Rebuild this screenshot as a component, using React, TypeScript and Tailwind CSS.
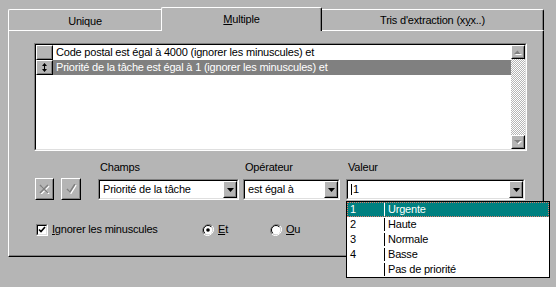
import React from "react";

const FONT = "font-['Liberation_Sans',Arial,sans-serif] text-[11px] leading-[13px] tracking-[-0.2px] text-black";

function Raised({ className = "", children }: { className?: string; children?: React.ReactNode }) {
  return (
    <div className={`border border-t-white border-l-white border-r-black border-b-black ${className}`}>
      <div className="flex h-full w-full items-center justify-center border border-t-transparent border-l-transparent border-r-[#808080] border-b-[#808080]">
        {children}
      </div>
    </div>
  );
}

function Sunken({ className = "", children }: { className?: string; children?: React.ReactNode }) {
  return (
    <div className={`border border-t-[#808080] border-l-[#808080] border-r-white border-b-white ${className}`}>
      <div className="flex h-full w-full border border-t-black border-l-black border-r-[#dfdfdf] border-b-[#dfdfdf] bg-white">
        {children}
      </div>
    </div>
  );
}

function ArrowDown() {
  return (
    <svg width="7" height="4" viewBox="0 0 7 4">
      <path d="M0 0h7L3.5 4z" fill="#000" />
    </svg>
  );
}

function ScrollArrow({ up }: { up?: boolean }) {
  return (
    <svg width="8" height="5" viewBox="0 0 8 5">
      {up ? (
        <>
          <path d="M1 5h7L4.5 1.5z" fill="#fff" />
          <path d="M0 4h7L3.5 0.5z" fill="#808080" />
        </>
      ) : (
        <>
          <path d="M1 1h7L4.5 4.5z" fill="#fff" />
          <path d="M0 0h7L3.5 3.5z" fill="#808080" />
        </>
      )}
    </svg>
  );
}

function Combo({ className, children }: { className: string; children: React.ReactNode }) {
  return (
    <Sunken className={`h-[21px] ${className}`}>
      <div className="flex flex-1 items-center overflow-hidden whitespace-nowrap pl-[3px]">{children}</div>
      <Raised className="h-full w-[14px] bg-[#b5b5b5]">
        <ArrowDown />
      </Raised>
    </Sunken>
  );
}

const values = [
  { n: "1", label: "Urgente" },
  { n: "2", label: "Haute" },
  { n: "3", label: "Normale" },
  { n: "4", label: "Basse" },
  { n: "", label: "Pas de priorité" },
];

export default function App() {
  return (
    <div className={`h-[287px] w-[556px] overflow-hidden bg-[#b5b5b5] pl-[8px] pt-[6px] ${FONT}`}>
      {/* tabs */}
      <div className="flex h-[24px] w-[536px] items-end">
        <div className="flex h-[21px] w-[153px] items-center justify-center rounded-tl-[2px] border-l border-t border-white pt-[2px]">
          Unique
        </div>
        <div className="relative z-10 -mb-px flex h-[24px] w-[161px] items-center justify-center rounded-t-[2px] border-l border-r border-t border-l-white border-r-black border-t-white bg-[#b5b5b5] shadow-[inset_-1px_0_0_#808080]">
          <span>
            <u>M</u>ultiple
          </span>
        </div>
        <div className="flex h-[21px] w-[222px] items-center justify-center rounded-tr-[2px] border-r border-t border-r-black border-t-white pt-[1px] shadow-[inset_-1px_0_0_#808080]">
          <span>
            Tris d'extraction (x<u>y</u>x..)
          </span>
        </div>
      </div>

      {/* panel */}
      <div className="h-[227px] w-[536px] border border-b-black border-l-white border-r-black border-t-white pl-[25px] pt-[12px] shadow-[inset_-1px_-1px_0_#808080]">
        <Sunken className="h-[108px] w-[493px]">
          <div className="flex flex-1 flex-col">
            <div className="flex h-[15px]">
              <Raised className="h-full w-[17px] bg-[#b5b5b5]" />
              <div className="flex items-center whitespace-nowrap pl-[3px]">
                Code postal est égal à 4000 (ignorer les minuscules) et
              </div>
            </div>
            <div className="flex h-[15px] bg-[#808080]">
              <Raised className="h-full w-[17px] bg-[#b5b5b5]">
                <svg width="5" height="9" viewBox="0 0 5 9">
                  <path d="M2.5 0L5 3H0z M0 6h5L2.5 9z" fill="#000" />
                  <rect x="2" y="2" width="1" height="5" fill="#000" />
                </svg>
              </Raised>
              <div className="flex items-center whitespace-nowrap pl-[3px] text-white">
                Priorité de la tâche est égal à 1 (ignorer les minuscules) et
              </div>
            </div>
          </div>
          <div className="flex w-[14px] flex-col bg-[repeating-conic-gradient(#b5b5b5_0_25%,#ffffff_0_50%)] bg-[length:2px_2px]">
            <Raised className="h-[14px] w-[14px] bg-[#b5b5b5]">
              <ScrollArrow up />
            </Raised>
            <div className="flex-1" />
            <Raised className="h-[14px] w-[14px] bg-[#b5b5b5]">
              <ScrollArrow />
            </Raised>
          </div>
        </Sunken>

        {/* field row */}
        <div className="mt-[10px] flex items-end">
          <Raised className="ml-[1px] h-[22px] w-[19px]">
            <svg width="11" height="10" viewBox="0 0 11 10">
              <path d="M2 2l8 8M10 2l-8 8" stroke="#fff" strokeWidth="1.6" />
              <path d="M1 1l8 8M9 1l-8 8" stroke="#808080" strokeWidth="1.6" />
            </svg>
          </Raised>
          <Raised className="ml-[7px] h-[22px] w-[20px]">
            <svg width="11" height="10" viewBox="0 0 11 10">
              <path d="M2 6l3 3 5-8" stroke="#fff" strokeWidth="1.6" fill="none" />
              <path d="M1 5l3 3 5-8" stroke="#808080" strokeWidth="1.6" fill="none" />
            </svg>
          </Raised>
          <div className="ml-[17px] flex flex-col">
            <div className="mb-[5px] pl-[2px]">Champs</div>
            <Combo className="w-[141px]">Priorité de la tâche</Combo>
          </div>
          <div className="ml-[4px] flex flex-col">
            <div className="mb-[5px] pl-[2px]">Opérateur</div>
            <Combo className="w-[97px]">est égal à</Combo>
          </div>
          <div className="relative ml-[6px] flex flex-col">
            <div className="mb-[5px] pl-[2px]">Valeur</div>
            <Combo className="w-[179px]">
              <span className="mr-px inline-block h-[11px] w-[1px] bg-black" />
              1
            </Combo>
            <div className="absolute left-0 top-full z-20 mt-px h-[77px] w-[204px] border border-black bg-white">
              {values.map((v, i) => (
                <div
                  key={i}
                  className={`flex h-[15px] leading-[13px] ${
                    i === 0 ? "border border-dotted border-[#e07a6a] bg-[#008080] text-white" : "border border-transparent"
                  }`}
                >
                  <div className="w-[36px] pl-[2px]">{v.n}</div>
                  <div className={`w-px ${i === 0 ? "bg-white" : "bg-black"}`} />
                  <div className="pl-[3px]">{v.label}</div>
                </div>
              ))}
            </div>
          </div>
        </div>

        {/* options row */}
        <div className="mt-[23px] flex items-center">
          <div className="flex w-[168px] items-center">
            <Sunken className="ml-[2px] h-[12px] w-[12px]">
              <svg width="8" height="8" viewBox="0 0 8 8">
                <path d="M1 3.5l2 2 4-4.5" stroke="#000" strokeWidth="1.6" fill="none" />
              </svg>
            </Sunken>
            <span className="ml-[4px]">
              <u>I</u>gnorer les minuscules
            </span>
          </div>
          <div className="flex w-[68px] items-center">
            <svg width="12" height="12" viewBox="0 0 12 12">
              <path d="M10.2 1.8A6 6 0 0 0 1.8 10.2" stroke="#808080" fill="none" />
              <path d="M1.8 10.2A6 6 0 0 0 10.2 1.8" stroke="#fff" fill="none" />
              <circle cx="6" cy="6" r="4.5" fill="#fff" />
              <path d="M9.2 2.8A4.5 4.5 0 0 0 2.8 9.2" stroke="#000" fill="none" />
              <circle cx="6" cy="6" r="1.8" fill="#000" />
            </svg>
            <span className="ml-[4px]">
              <u>E</u>t
            </span>
          </div>
          <div className="flex items-center">
            <svg width="12" height="12" viewBox="0 0 12 12">
              <path d="M10.2 1.8A6 6 0 0 0 1.8 10.2" stroke="#808080" fill="none" />
              <path d="M1.8 10.2A6 6 0 0 0 10.2 1.8" stroke="#fff" fill="none" />
              <circle cx="6" cy="6" r="4.5" fill="#fff" />
              <path d="M9.2 2.8A4.5 4.5 0 0 0 2.8 9.2" stroke="#000" fill="none" />
            </svg>
            <span className="ml-[4px]">
              <u>O</u>u
            </span>
          </div>
        </div>
      </div>
    </div>
  );
}
